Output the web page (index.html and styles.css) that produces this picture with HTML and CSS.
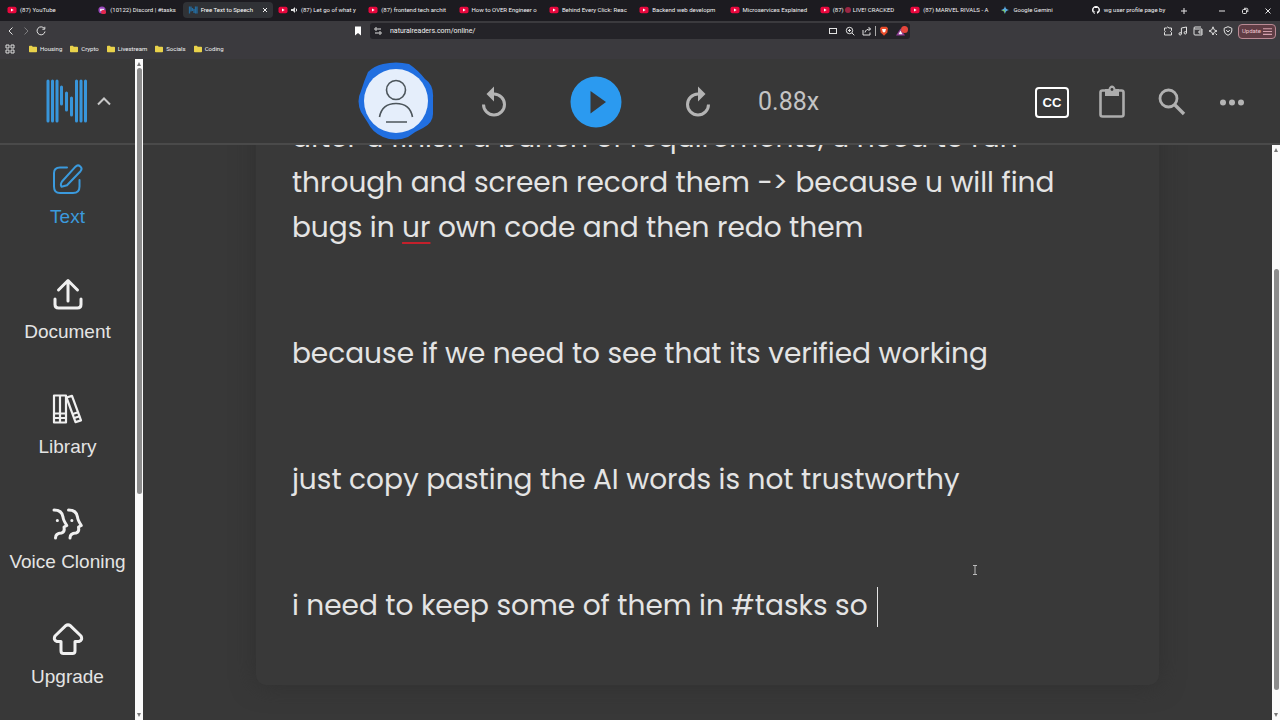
FILE: index.html
```html
<!DOCTYPE html>
<html lang="en">
<head>
<meta charset="utf-8">
<title>Free Text to Speech</title>
<link rel="stylesheet" href="styles.css">
</head>
<body>
<svg class="defs" aria-hidden="true">
  <symbol id="yt" viewBox="0 0 10 8"><rect x="0.5" y="0.8" width="9" height="6.4" rx="1.8" fill="#e8083e"/><path d="M4 2.500v3L6.700 4z" fill="#fff"/></symbol>
  <symbol id="folder" viewBox="0 0 8 8"><path d="M0 1.600q0-.8.8-.8h2l1 1h3.400q.8 0 .8.8v3.800q0 .8-.8.8H.8Q0 7.200 0 6.400z" fill="#e9d24b"/></symbol>
</svg>
<header class="browser">
  <div class="strip">
    <nav class="tabs" aria-label="Tabs">
      <button class="tab"><svg class="fav"><use href="#yt"/></svg><span class="name">(87) YouTube</span></button>
      <button class="tab"><svg class="fav" viewBox="0 0 10 10"><circle cx="5" cy="5" r="4.500" fill="#9b48bd"/><path d="M2.500 3.500h5v3h-5z" fill="#f3dff5"/><rect x="4" y="5" width="6" height="5" rx="2" fill="#e2284d"/></svg><span class="name">(10122) Discord | #tasks</span></button>
      <button class="tab active"><svg class="fav" viewBox="0 0 10 8" fill="none" stroke="#256a9c" stroke-width="1.300"><path d="M1.500.5v7M3 .5v5M4.500 2v3M6 3v4M7.500.5v7M9 .5v7"/></svg><span class="name">Free Text to Speech</span><svg class="close" viewBox="0 0 6 6" stroke="#eee" fill="none"><path d="M1 1l4 4M5 1L1 5"/></svg></button>
      <button class="tab"><svg class="fav"><use href="#yt"/></svg><svg class="sound" viewBox="0 0 7 8" fill="#ddd"><path d="M0 3h2l2-2v6L2 5H0z"/><path d="M5 2.500q1.500 1.500 0 3" fill="none" stroke="#ddd"/></svg><span class="name">(87) Let go of what y</span></button>
      <button class="tab"><svg class="fav"><use href="#yt"/></svg><span class="name">(87) frontend tech archit</span></button>
      <button class="tab"><svg class="fav"><use href="#yt"/></svg><span class="name">How to OVER Engineer o</span></button>
      <button class="tab"><svg class="fav"><use href="#yt"/></svg><span class="name">Behind Every Click: Reac</span></button>
      <button class="tab"><svg class="fav"><use href="#yt"/></svg><span class="name">Backend web developm</span></button>
      <button class="tab"><svg class="fav"><use href="#yt"/></svg><span class="name">Microservices Explained</span></button>
      <button class="tab"><svg class="fav"><use href="#yt"/></svg><span class="name">(87) <span class="live"></span> LIVE! CRACKED</span></button>
      <button class="tab"><svg class="fav"><use href="#yt"/></svg><span class="name">(87) MARVEL RIVALS - A</span></button>
      <button class="tab"><svg class="fav" viewBox="0 0 10 10"><path d="M5 0q.7 4.300 5 5-4.300.7-5 5-.7-4.300-5-5 4.300-.7 5-5z" fill="#58a9df"/><path d="M5 5H0q4.300.7 5 5z" fill="#7fc46b"/></svg><span class="name">Google Gemini</span></button>
      <button class="tab"><svg class="fav" viewBox="0 0 16 16"><path fill="#fff" d="M8 0C3.580 0 0 3.580 0 8c0 3.540 2.290 6.530 5.470 7.590.4.070.55-.17.55-.38v-1.490c-2.010.37-2.530-.49-2.690-.94-.09-.23-.48-.94-.82-1.130-.28-.15-.68-.52-.01-.53.63-.01 1.080.58 1.230.82.72 1.210 1.870.87 2.330.66.070-.52.28-.87.51-1.070-1.780-.2-3.640-.89-3.640-3.950 0-.87.31-1.590.82-2.150-.08-.2-.36-1.020.080-2.120 0 0 .67-.21 2.200.82a7.600 7.600 0 0 1 4 0c1.530-1.040 2.200-.82 2.200-.82.44 1.100.16 1.920.080 2.120.51.56.82 1.270.82 2.150 0 3.070-1.870 3.750-3.650 3.950.29.25.54.73.54 1.480v2.200c0 .21.15.46.55.38A8 8 0 0 0 16 8c0-4.420-3.580-8-8-8z"/></svg><span class="name">wg user profile page by</span></button>
    </nav>
    <div class="window">
      <button aria-label="New tab"><svg viewBox="0 0 8 8"><path d="M4 1v6M1 4h6"/></svg></button>
      <span class="grow"></span>
      <button aria-label="Minimize"><svg viewBox="0 0 8 8"><path d="M1 4h6"/></svg></button>
      <button aria-label="Restore"><svg viewBox="0 0 8 8"><rect x="1.500" y="2.500" width="4" height="4" rx="1"/><path d="M3 1.300h2.500q1.300 0 1.300 1.200V5"/></svg></button>
      <button aria-label="Close"><svg viewBox="0 0 8 8"><path d="M1.500 1.500l5 5M6.500 1.500l-5 5"/></svg></button>
    </div>
  </div>
  <div class="toolbar">
    <div class="history">
      <button aria-label="Back"><svg viewBox="0 0 10 10"><path d="M6.500 1.500L3 5l3.500 3.500"/></svg></button>
      <button class="dim" aria-label="Forward"><svg viewBox="0 0 10 10"><path d="M3.500 1.500L7 5 3.500 8.500"/></svg></button>
      <button aria-label="Reload"><svg viewBox="0 0 10 10"><path d="M8.300 2.500A4 4 0 1 0 9 5.500M8.800.8v2.400H6.400"/></svg></button>
    </div>
    <button class="mark" aria-label="Bookmark"><svg viewBox="0 0 10 10"><path d="M2 .5h6v9L5 7 2 9.500z" fill="#fff" stroke="none"/></svg></button>
    <div class="address">
      <svg viewBox="0 0 10 10"><circle cx="3" cy="3" r="1.200"/><path d="M5 3h3M2 7h3"/><circle cx="7" cy="7" r="1.200"/></svg>
      <input class="url" type="text" aria-label="Address" value="naturalreaders.com/online/">
      <svg viewBox="0 0 10 10"><rect x="1.500" y="2.500" width="7" height="5"/></svg>
      <svg viewBox="0 0 10 10"><circle cx="4.500" cy="4.500" r="3.200"/><path d="M3 4.500h3M4.500 3v3M7 7l2.300 2.300"/></svg>
      <svg viewBox="0 0 10 10"><path d="M1 4v5h7V6.500M3 6.500Q3.500 3 8.500 3M6.500 1l2 2-2 2"/></svg>
      <span class="rule"></span>
      <svg viewBox="0 0 10 10"><path d="M2.500.7h5L9 2.300 8.300 6.500 5 9.700 1.700 6.500 1 2.300z" fill="#e94d2c" stroke="none"/><path d="M3 3h4L6.300 5.500 5 6.700 3.700 5.500z" fill="#fff" stroke="none"/></svg>
      <svg class="alert" viewBox="0 0 12 10"><path d="M0 9.500L4.500 2.500 9 9.500z" fill="#8d3a93" stroke="none"/><path d="M2.500 8.200L4.500 4.500l2 3.700z" fill="#fff" stroke="none"/><circle cx="8.500" cy="3.500" r="3.500" fill="#e5463c" stroke="none"/></svg>
    </div>
    <div class="actions">
      <svg viewBox="0 0 10 10"><path d="M1.500 2h2q1-2 2.500 0h2.500v2.500Q6.500 5.500 8.500 6.500V9h-7V6.500q1.500-1 0-2z"/></svg>
      <svg viewBox="0 0 10 10"><circle cx="2.200" cy="7.800" r="1.200"/><circle cx="7.300" cy="6.800" r="1.200"/><path d="M3.400 7.800V2l5.100-1v5.800"/></svg>
      <svg viewBox="0 0 10 10"><path d="M1 2.500V8q0 1 1 1h7V3H2q-1 0-1-1t1-1h6M9 5H6v2h3"/></svg>
      <svg viewBox="0 0 10 10"><path d="M5 .8l1.200 3L9 5 6.200 6.200 5 9 3.800 6.200 1 5l2.800-1.200zM7.500 7.500l1.500 1.500"/></svg>
      <svg viewBox="0 0 10 10"><path d="M5 .7l3.800 1.500V5Q8.500 8 5 9.300 1.500 8 1.200 5V2.200zM3.200 4l1.800 2L6.800 4"/></svg>
      <button class="update">Update <svg viewBox="0 0 8 8"><path d="M0 1.500h8M0 4h8M0 6.500h8"/></svg></button>
    </div>
  </div>
  <nav class="bookmarks" aria-label="Bookmarks">
    <svg class="apps" viewBox="0 0 10 10"><path d="M1 1h3v3H1zM6 1h3v3H6zM1 6h3v3H1zM6 6h3v3H6z"/></svg>
    <a href="#"><svg><use href="#folder"/></svg>Housing</a>
    <a href="#"><svg><use href="#folder"/></svg>Crypto</a>
    <a href="#"><svg><use href="#folder"/></svg>Livestream</a>
    <a href="#"><svg><use href="#folder"/></svg>Socials</a>
    <a href="#"><svg><use href="#folder"/></svg>Coding</a>
  </nav>
</header>
<div class="app">
  <aside class="side">
    <button class="brand" aria-label="Menu">
      <svg class="logo" viewBox="0 0 42 44"><path d="M2 2v40M6.500 2v40M11 2v40M15.500 8v17M20.500 14v17M25.500 19v17M30.500 2v40M35 2v40M39.500 2v40"/></svg>
      <svg class="caret" viewBox="0 0 14 10"><path d="M1 8.500l6-6 6 6"/></svg>
    </button>
    <nav class="menu">
      <a class="item current" href="#"><svg viewBox="0 0 32 32"><path d="M15 4.500H8Q2 4.500 2 10v13.500Q2 30 8 30h13q6.500 0 6.500-6.500V17"/><path d="M10 18.500L23.500 3.700q2.300-2.400 4.800-.3 2.400 2.200.2 4.800L15 22.300l-5.500 1.500q-1.500-2.300.5-5.300z"/></svg>Text</a>
      <a class="item" href="#"><svg class="bold" viewBox="0 0 32 32"><path d="M16 23V3M6.500 12L16 2.500 25.500 12M3 21v5.500Q3 30 6.500 30h19q3.500 0 3.500-3.500V21"/></svg>Document</a>
      <a class="item" href="#"><svg class="books" viewBox="0 0 32 32"><path d="M2 2.500h6v27H2zM8 2.500h6v27H8zM2 20.500h12M2 25h12"/><path d="M14.500 4.500l5.500-1.600 9 24.500-5.500 1.700zM20.700 21l5.500-1.700M22.200 25l5.500-1.700"/></svg>Library</a>
      <a class="item" href="#"><svg class="bold" viewBox="0 0 32 32"><path d="M2 2q8 0 9 7 .2 3 3.800 8.500l-2.800 1.500q1 5-2.500 6-6 0-6 5M16.500 2q8 0 9 7 .2 3 3.800 8.500l-2.800 1.500q1 5-2.500 6-6 0-6 5M5.300 12.500h.1M19.800 12.500h.1"/></svg>Voice Cloning</a>
      <a class="item" href="#"><svg class="bold" viewBox="0 0 32 32"><path d="M13.500 2.800Q16 1 18.500 2.800L29 13q2 4-2 5.500h-4V28q0 2.500-2.500 2.500h-9Q9 30.500 9 28v-9.500H5Q1 17 3 13z"/></svg>Upgrade</a>
    </nav>
  </aside>
  <div class="bar" aria-hidden="true"><span class="up"></span><span class="thumb first"></span><span class="down"></span></div>
  <main class="main">
    <header class="player">
      <div class="voice"><button class="avatar" aria-label="Voice"><svg viewBox="0 0 76 78"><path d="M25 2Q38-1 51 2q9 6 16 15 9 6 8 19v16q0 9-10 14-9 4-15 9-13 5-25 0-11-5-15-14L3 50Q-2 39 3 29q3-10 7-19Q16 4 25 2z" fill="#216fe0"/><circle cx="38" cy="39" r="32" fill="#e5eefb"/><g fill="none" stroke="#4c555b" stroke-width="1.600"><circle cx="38" cy="28" r="9.500"/><path d="M21.500 55Q24 41.500 38 41.500T54.500 55M28 60h21"/></g></svg></button></div>
      <button class="control" aria-label="Rewind"><svg viewBox="0 0 32 36"><path d="M5.500 20.500a10.500 10.500 0 1 0 10.500-10.500H13" fill="none" stroke="#b4b4b4" stroke-width="3"/><path d="M16 2.500v15L8.500 10z" fill="#b4b4b4"/></svg></button>
      <button class="control" aria-label="Play"><svg class="play" viewBox="0 0 52 52"><circle cx="26" cy="26" r="25.500" fill="#2b9af0"/><path d="M20.500 15v22.500L36 26z" fill="#383838"/></svg></button>
      <button class="control" aria-label="Forward"><svg viewBox="0 0 32 36"><path d="M26.500 20.500A10.500 10.500 0 1 1 16 10h3" fill="none" stroke="#b4b4b4" stroke-width="3"/><path d="M16 2.500v15l7.500-7.500z" fill="#b4b4b4"/></svg></button>
      <button class="speed">0.88x</button>
      <span class="grow"></span>
      <button class="tool" aria-label="Captions"><span class="cc">CC</span></button>
      <button class="tool" aria-label="Clipboard"><svg viewBox="0 0 32 36"><rect x="4.500" y="6.500" width="23" height="26" rx="2" fill="none" stroke="#acacac" stroke-width="2.600"/><path d="M9 5h3.500q1-3.500 3.500-3.500T19.500 5H23v7H9z" fill="#acacac"/><circle cx="16" cy="5.500" r="1.400" fill="#383838"/></svg></button>
      <button class="tool" aria-label="Search"><svg viewBox="0 0 32 36" fill="none" stroke="#b0b0b0"><circle cx="12.500" cy="14.500" r="8.500" stroke-width="2.800"/><path d="M18.500 20.500l9.500 9.500" stroke-width="3.400"/></svg></button>
      <button class="tool" aria-label="More"><svg viewBox="0 0 32 36" fill="#b4b4b4"><circle cx="7" cy="18.500" r="3"/><circle cx="16" cy="18.500" r="3"/><circle cx="25" cy="18.500" r="3"/></svg></button>
    </header>
    <div class="content">
      <div class="page">
        <article class="sheet" contenteditable="true" spellcheck="false">
          <p>after u finish a bunch of requirements, u need to run<br>through and screen record them -&gt; because u will find<br>bugs in <span class="typo">ur</span> own code and then redo them</p>
          <p>because if we need to see that its verified working</p>
          <p>just copy pasting the AI words is not trustworthy</p>
          <p>i need to keep some of them in #tasks so <span class="cursor"></span></p>
        </article>
        <svg class="pointer" viewBox="0 0 6 10"><path d="M1 .5h4M1 9.500h4M3 .5v9"/></svg>
      </div>
      <div class="bar" aria-hidden="true"><span class="up"></span><span class="thumb second"></span><span class="down"></span></div>
    </div>
  </main>
</div>
</body>
</html>
```
FILE: styles.css
```css
* { box-sizing: border-box; }
body {
  margin: 0;
  height: 100vh;
  display: flex;
  flex-direction: column;
  overflow: hidden;
  background: #383838;
  color: #e4e4e4;
  font-family: "Liberation Sans", Arial, sans-serif;
}
button, input { border: 0; padding: 0; background: none; color: inherit; font: inherit; }
a { color: inherit; text-decoration: none; }
svg { flex: none; display: block; }
.defs { position: absolute; width: 0; height: 0; }
.grow { flex: 1; }

.browser { padding-bottom: 2px; font: 6px/10px Roboto, "Open Sans", sans-serif; background: #3b3a3e; color: #f2f2f4; }
.strip { display: flex; height: 21px; padding-left: 2px; background: #1c1b20; }
.tabs { flex: 1; display: flex; min-width: 0; }
.tab { flex: 1 1 0; min-width: 0; display: flex; align-items: center; gap: 3px; padding: 0 5px; margin: 2px 0 3px; border-radius: 4px; }
.tab.active { background: #303236; color: #fff; }
.fav { width: 10px; height: 8px; }
.name { flex: 1; min-width: 0; white-space: nowrap; text-align: left; }
.live { display: inline-block; width: 6px; height: 6px; border-radius: 50%; background: #9b2744; vertical-align: middle; }
.sound { width: 7px; height: 8px; }
.close { width: 6px; height: 6px; }
.window { display: flex; align-items: center; gap: 15px; width: 104px; padding: 0 8px 0 4px; }
.window svg { width: 8px; height: 8px; fill: none; stroke: #e6e6e6; stroke-width: 1; }
.toolbar { display: flex; align-items: center; height: 20px; }
.toolbar svg { width: 10px; height: 10px; fill: none; stroke: #e2e2e2; stroke-width: 1; }
.history { display: flex; gap: 5px; width: 353px; padding-left: 6px; }
.dim { opacity: .4; }
.mark { margin-right: 7px; }
.address { flex: 1; display: flex; align-items: center; gap: 7px; height: 16px; padding: 0 2px 0 3px; border-radius: 3px; background: #242328; }
.url { flex: 1; min-width: 0; font-size: 7px; color: #f2f2f2; }
.rule { width: 1px; height: 10px; margin: 0 -4px; background: #aaa; }
.toolbar .alert { width: 12px; }
.actions { display: flex; align-items: center; justify-content: flex-end; gap: 5px; width: 370px; padding-right: 4px; }
.update { display: flex; align-items: center; gap: 2px; height: 15px; padding: 0 3px; border: 1px solid #b98a94; border-radius: 4px; background: #603d45; color: #f0c5cf; }
.toolbar .update svg { width: 9px; height: 9px; stroke: #d3a0ac; }
.bookmarks { display: flex; align-items: center; gap: 8px; height: 16px; padding-left: 5px; }
.bookmarks a { display: flex; align-items: center; gap: 3px; }
.bookmarks a svg { width: 8px; height: 8px; }
.bookmarks .apps { width: 10px; height: 10px; margin-right: 6px; fill: none; stroke: #ddd; }

.app { flex: 1; min-height: 0; display: flex; }
.side { width: 135px; overflow: hidden; }
.brand { display: flex; align-items: center; gap: 9px; width: 100%; height: 86px; padding-left: 46px; border-bottom: 2px solid #4a4a4a; }
.logo { width: 42px; height: 44px; fill: none; stroke: #3895da; stroke-width: 3; stroke-linecap: round; }
.caret { width: 14px; height: 10px; fill: none; stroke: #c8c8c8; stroke-width: 2; }
.menu { display: flex; flex-direction: column; padding-top: 18px; }
.item { display: flex; flex-direction: column; align-items: center; gap: 12px; height: 115px; font-size: 19px; line-height: 20px; white-space: nowrap; }
.item svg { width: 32px; height: 32px; fill: none; stroke: #f0f0f0; stroke-width: 2; stroke-linejoin: round; stroke-linecap: round; }
.item .bold { stroke-width: 3; }
.item .books { stroke-width: 2.2; }
.current { color: #3b9add; }
.item.current svg { stroke: #3b9add; }
.bar { flex: none; display: flex; flex-direction: column; align-items: center; width: 8px; padding: 3px 0; background: #fafafa; }
.up, .down { border: 2px solid transparent; }
.up { border-top: 0; border-bottom: 4px solid #777; }
.down { border-bottom: 0; border-top: 4px solid #777; margin-top: auto; }
.thumb { width: 5px; border-radius: 3px; background: #8c8c8c; }
.first { height: 65%; margin-top: 2px; }
.second { height: 74%; margin-top: 117px; }

.main { flex: 1; min-width: 0; display: flex; flex-direction: column; }
.player { flex: none; display: flex; align-items: center; height: 86px; padding: 2px 18px 0 206px; border-bottom: 2px solid #4a4a4a; }
.voice { display: flex; justify-content: center; width: 94px; padding-bottom: 2px; }
.avatar svg { width: 76px; height: 78px; }
.control { display: flex; justify-content: center; width: 102px; }
.control svg, .tool svg { width: 32px; height: 36px; }
.control .play { width: 52px; height: 52px; }
.speed { padding-left: 9px; font: 25px/30px Roboto, sans-serif; color: #c4c4c4; }
.tool { display: flex; justify-content: center; width: 60px; }
.cc { display: block; width: 34px; border: 2px solid #fff; border-radius: 4px; color: #fff; font-size: 13px; font-weight: bold; line-height: 27px; }
.content { flex: 1; min-height: 0; display: flex; }
.page { position: relative; flex: 1; display: flex; flex-direction: column; justify-content: flex-end; align-items: center; overflow: hidden; padding-bottom: 35px; }
.sheet { width: 80%; padding: 60px 36px 57px; border-radius: 10px; background: #393939; box-shadow: 0 0 24px #303030; outline: 0; font: 28px/45px Poppins, Inter, sans-serif; white-space: nowrap; }
.sheet p { margin: 0 0 81px; }
.sheet p:last-child { margin: 0; }
.typo { text-decoration: underline 2px #c4202b; text-underline-offset: 5px; }
.cursor { display: inline-block; width: 1px; height: 40px; margin-left: 2px; vertical-align: middle; background: #e4e4e4; }
.pointer { position: absolute; right: 26%; bottom: 145px; width: 6px; height: 10px; fill: none; stroke: #bbb; }
```
